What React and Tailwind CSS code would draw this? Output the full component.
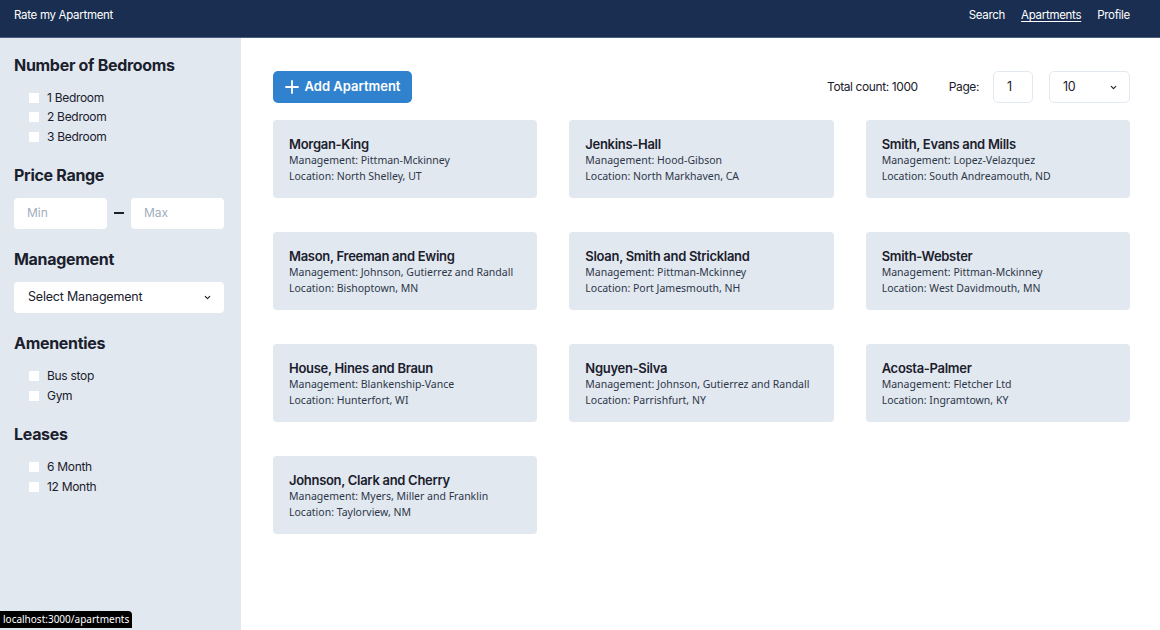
import React from "react";

const apartments = [
  ["Morgan-King", "Pittman-Mckinney", "North Shelley, UT"],
  ["Jenkins-Hall", "Hood-Gibson", "North Markhaven, CA"],
  ["Smith, Evans and Mills", "Lopez-Velazquez", "South Andreamouth, ND"],
  ["Mason, Freeman and Ewing", "Johnson, Gutierrez and Randall", "Bishoptown, MN"],
  ["Sloan, Smith and Strickland", "Pittman-Mckinney", "Port Jamesmouth, NH"],
  ["Smith-Webster", "Pittman-Mckinney", "West Davidmouth, MN"],
  ["House, Hines and Braun", "Blankenship-Vance", "Hunterfort, WI"],
  ["Nguyen-Silva", "Johnson, Gutierrez and Randall", "Parrishfurt, NY"],
  ["Acosta-Palmer", "Fletcher Ltd", "Ingramtown, KY"],
  ["Johnson, Clark and Cherry", "Myers, Miller and Franklin", "Taylorview, NM"],
];

function Check({ label }) {
  return (
    <div className="flex items-center h-[19.5px] pl-[15px]">
      <span className="w-[10px] h-[10px] bg-white mr-[8px]" />
      <span className="text-[12px] text-[#1a202c] tracking-[-0.3px]">{label}</span>
    </div>
  );
}

function Chevron() {
  return (
    <svg width="9" height="9" viewBox="0 0 24 24" fill="none" stroke="#1a202c" strokeWidth="3" strokeLinecap="round" strokeLinejoin="round">
      <path d="M6 9l6 6 6-6" />
    </svg>
  );
}

export default function App() {
  return (
    <div className="w-[1160px] h-[630px] flex flex-col bg-white overflow-hidden relative" style={{ fontFamily: "Inter, 'Noto Sans', sans-serif" }}>
      <nav className="h-[38px] bg-[#1a2e51] flex items-center justify-between pl-[14px] pr-[30px] pb-[6px] text-white text-[11.5px] border-b border-[#4a5f80]">
        <span className="tracking-[-0.3px]">Rate my Apartment</span>
        <div className="flex gap-[16px] tracking-[-0.3px]">
          <span>Search</span>
          <span className="underline underline-offset-2">Apartments</span>
          <span>Profile</span>
        </div>
      </nav>
      <div className="flex flex-1">
        <aside className="w-[241px] bg-[#e2e8f0] px-[14px] pt-[17px] text-[#1a202c]">
          <h2 className="text-[16px] font-bold leading-[20px] tracking-[-0.3px] mb-[13px]">Number of Bedrooms</h2>
          <Check label="1 Bedroom" />
          <Check label="2 Bedroom" />
          <Check label="3 Bedroom" />
          <h2 className="text-[16px] font-bold leading-[20px] tracking-[-0.3px] mt-[18px] mb-[13px]">Price Range</h2>
          <div className="flex items-center">
            <div className="w-[93px] h-[31px] bg-white rounded-[4px] flex items-center pl-[13px] text-[12px] text-[#a0aec0]">Min</div>
            <div className="w-[10px] h-[2px] bg-[#1a202c] mx-[7px]" />
            <div className="w-[93px] h-[31px] bg-white rounded-[4px] flex items-center pl-[13px] text-[12px] text-[#a0aec0]">Max</div>
          </div>
          <h2 className="text-[16px] font-bold leading-[20px] tracking-[-0.3px] mt-[20px] mb-[13px]">Management</h2>
          <div className="w-[210px] h-[31px] bg-white rounded-[4px] flex items-center justify-between pl-[14px] pr-[12px] text-[12.5px] tracking-[-0.2px]">
            <span>Select Management</span>
            <Chevron />
          </div>
          <h2 className="text-[16px] font-bold leading-[20px] tracking-[-0.3px] mt-[20px] mb-[14px]">Amenenties</h2>
          <Check label="Bus stop" />
          <Check label="Gym" />
          <h2 className="text-[16px] font-bold leading-[20px] tracking-[-0.3px] mt-[18px] mb-[14px]">Leases</h2>
          <Check label="6 Month" />
          <Check label="12 Month" />
        </aside>
        <main className="flex-1 pl-[32px] pr-[30px] pt-[33px]">
          <div className="flex items-center justify-between h-[32px]">
            <div className="h-[32px] w-[139px] bg-[#3182ce] rounded-[5px] flex items-center justify-center gap-[6px] text-white text-[13px] font-semibold">
              <svg width="14" height="14" viewBox="0 0 14 14" stroke="white" strokeWidth="1.8" strokeLinecap="round">
                <path d="M7 1v12M1 7h12" />
              </svg>
              <span>Add Apartment</span>
            </div>
            <div className="flex items-center text-[12px] text-[#1a202c] tracking-[-0.4px]">
              <span>Total count: 1000</span>
              <span className="ml-[31px]">Page:</span>
              <div className="ml-[14px] w-[40px] h-[32px] border border-[#e2e8f0] rounded-[5px] flex items-center pl-[13px] text-[12.5px]">1</div>
              <div className="ml-[16px] w-[81px] h-[32px] border border-[#e2e8f0] rounded-[5px] flex items-center justify-between pl-[13px] pr-[11px] text-[12.5px]">
                <span>10</span>
                <Chevron />
              </div>
            </div>
          </div>
          <div className="grid grid-cols-3 gap-x-[32px] gap-y-[34px] mt-[17px]">
            {apartments.map(([name, mgmt, loc]) => (
              <div key={name} className="h-[78px] bg-[#e2e8f0] rounded-[4px] px-[16px] pt-[16px]">
                <div className="text-[13px] font-semibold text-[#1a202c] leading-[16px] tracking-[-0.3px]">{name}</div>
                <div className="text-[10.5px] text-[#2d3748] leading-[16px]" style={{ fontFamily: "'Noto Sans', sans-serif" }}>Management: {mgmt}</div>
                <div className="text-[10.5px] text-[#2d3748] leading-[16px]" style={{ fontFamily: "'Noto Sans', sans-serif" }}>Location: {loc}</div>
              </div>
            ))}
          </div>
        </main>
      </div>
      <div className="absolute left-0 bottom-[2px] h-[17px] bg-black text-white text-[10px] px-[3px] flex items-center rounded-tr-[4px]" style={{ fontFamily: "'Noto Sans', sans-serif" }}>
        localhost:3000/apartments
      </div>
    </div>
  );
}
